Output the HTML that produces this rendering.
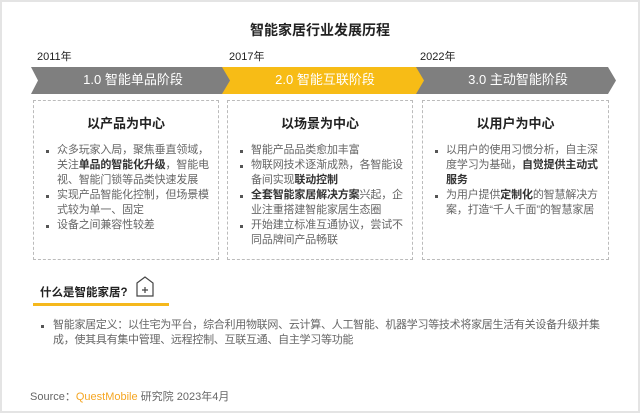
<!DOCTYPE html>
<html><head><meta charset="utf-8"><style>
*{margin:0;padding:0;box-sizing:border-box}
body{width:640px;height:413px;background:#fff;font-family:"Liberation Sans","Noto Sans CJK SC",sans-serif;position:relative;overflow:hidden;color:#555}
.frame{position:absolute;left:0;top:0;width:640px;height:413px;border:2px solid #e4e4e4}
.title{position:absolute;top:20px;left:0;width:640px;text-align:center;font-size:14px;font-weight:bold;color:#222}
.yr{position:absolute;top:48px;font-size:11px;color:#222}
svg.ar{position:absolute;left:0;top:0}
.at{position:absolute;top:69px;font-size:13px;color:#fff;text-align:center}
.box{position:absolute;top:100px;height:160px;border:1px dashed #bbb}
.box h3{text-align:center;font-size:13px;color:#222;margin-top:12px;font-weight:bold}
.box ul{list-style:none;margin:11px 0 0 10px;font-size:11px;line-height:15px;color:#666;white-space:nowrap;letter-spacing:-0.15px}
.box li{position:relative;padding-left:13px}
.box li:before{content:"";position:absolute;left:2px;top:7px;width:3px;height:3px;background:#555}
.box b{color:#333}
.q{position:absolute;left:40px;top:284px;font-size:11.5px;color:#222;font-weight:bold}
.line{position:absolute;left:33px;top:303px;width:136px;height:3px;background:#f5b81c}
.def{position:absolute;left:40px;top:318px;width:590px;font-size:11px;line-height:15px;color:#666;padding-left:13px;white-space:nowrap;letter-spacing:-0.28px}
.def:before{content:"";position:absolute;left:1px;top:7px;width:3px;height:3px;background:#555}
.src{position:absolute;left:30px;top:388px;font-size:11px;color:#666}
</style></head><body>
<div class="frame"></div>
<div class="title">智能家居行业发展历程</div>
<div class="yr" style="left:37px">2011年</div>
<div class="yr" style="left:229px">2017年</div>
<div class="yr" style="left:420px">2022年</div>
<svg class="ar" width="640" height="413">
<polygon points="31,67 225,67 233,80.5 225,94 31,94 38,80.5" fill="#7f7f7f"/>
<polygon points="415,67 608,67 616,80.5 608,94 415,94 423,80.5" fill="#7f7f7f"/>
<polygon points="222,67 416,67 424,80.5 416,94 222,94 230,80.5" fill="#f7bc16"/>
<g fill="none" stroke="#444" stroke-width="1.2"><path d="M137 283 L145 277 L153 283 L153 296 L137 296 Z"/><path d="M145 287v6M142 290h6"/></g>
</svg>
<div class="at" style="left:38px;width:190px">1.0 智能单品阶段</div>
<div class="at" style="left:230px;width:190px">2.0 智能互联阶段</div>
<div class="at" style="left:423px;width:190px">3.0 主动智能阶段</div>
<div class="box" style="left:33px;width:186px"><h3>以产品为中心</h3><ul>
<li>众多玩家入局，聚焦垂直领域，<br>关注<b>单品的智能化升级</b>，智能电<br>视、智能门锁等品类快速发展</li>
<li>实现产品智能化控制，但场景模<br>式较为单一、固定</li>
<li>设备之间兼容性较差</li></ul></div>
<div class="box" style="left:227px;width:186px"><h3>以场景为中心</h3><ul>
<li>智能产品品类愈加丰富</li>
<li>物联网技术逐渐成熟，各智能设<br>备间实现<b>联动控制</b></li>
<li><b>全套智能家居解决方案</b>兴起，企<br>业注重搭建智能家居生态圈</li>
<li>开始建立标准互通协议，尝试不<br>同品牌间产品畅联</li></ul></div>
<div class="box" style="left:422px;width:187px"><h3>以用户为中心</h3><ul>
<li>以用户的使用习惯分析，自主深<br>度学习为基础，<b>自觉提供主动式<br>服务</b></li>
<li>为用户提供<b>定制化</b>的智慧解决方<br>案，打造“千人千面”的智慧家居</li></ul></div>
<div class="q">什么是智能家居?</div>
<div class="line"></div>
<div class="def">智能家居定义：以住宅为平台，综合利用物联网、云计算、人工智能、机器学习等技术将家居生活有关设备升级并集<br>成，使其具有集中管理、远程控制、互联互通、自主学习等功能</div>
<div class="src">Source：<span style="color:#f5a623">QuestMobile</span> 研究院 2023年4月</div>
</body></html>
